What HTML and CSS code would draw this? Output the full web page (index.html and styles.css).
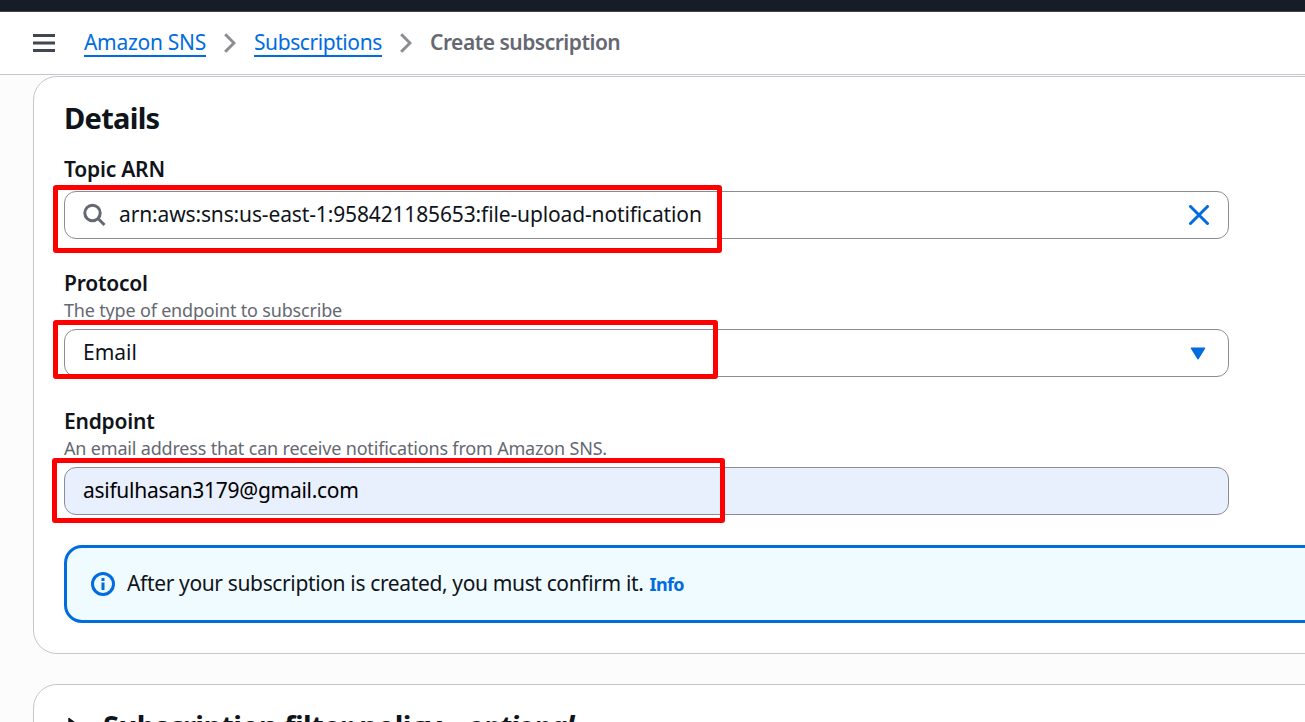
FILE: index.html
```
<!DOCTYPE html>
<html lang="en">
<head>
<meta charset="utf-8">
<title>Create subscription</title>
<link rel="stylesheet" href="styles.css">
</head>
<body>
<div class="topnav"></div>
<header class="header">
  <svg class="menu" width="22" height="18" viewBox="0 0 22 18"><path d="M0 1.5h22M0 9h22M0 16.5h22" stroke="#424650" stroke-width="3"/></svg>
  <nav class="crumbs">
    <a class="crumb crumb-service" href="#">Amazon SNS</a>
    <svg class="chevron" width="12" height="20" viewBox="0 0 12 20"><path d="M1.200 1.200L10 10l-8.800 8.800" fill="none" stroke="#8c8c94" stroke-width="3"/></svg>
    <a class="crumb crumb-list" href="#">Subscriptions</a>
    <svg class="chevron" width="12" height="20" viewBox="0 0 12 20"><path d="M1.200 1.200L10 10l-8.800 8.800" fill="none" stroke="#8c8c94" stroke-width="3"/></svg>
    <span class="crumb-current">Create subscription</span>
  </nav>
</header>
<main class="content">
  <section class="card">
    <h2 class="title details-title">Details</h2>
    <div class="field">
      <div class="label label-topic">Topic ARN</div>
      <div class="input">
        <svg class="search" width="24" height="24" viewBox="0 0 24 24"><circle cx="9.500" cy="10" r="7.700" fill="none" stroke="#656871" stroke-width="3"/><path d="M15 15.500l6.500 6.500" stroke="#656871" stroke-width="3"/></svg>
        <span class="value value-arn">arn:aws:sns:us-east-1:958421185653:file-upload-notification</span>
        <svg class="clear" width="20" height="20" viewBox="0 0 20 20"><path d="M1.500 1.500l17 17M18.500 1.500l-17 17" stroke="#006ce0" stroke-width="3" stroke-linecap="round"/></svg>
        <div class="mark mark-topic"></div>
      </div>
    </div>
    <div class="field">
      <div class="label">Protocol</div>
      <div class="hint">The type of endpoint to subscribe</div>
      <div class="input">
        <span class="value">Email</span>
        <svg class="caret" width="16" height="13" viewBox="0 0 16 13"><path d="M1.500 1.200h13L8 11.700z" fill="#006ce0" stroke="#006ce0" stroke-width="1.600" stroke-linejoin="round"/></svg>
        <div class="mark mark-protocol"></div>
      </div>
    </div>
    <div class="field">
      <div class="label">Endpoint</div>
      <div class="hint">An email address that can receive notifications from Amazon SNS.</div>
      <div class="input input-filled">
        <span class="value value-endpoint">asifulhasan3179@gmail.com</span>
        <div class="mark mark-endpoint"></div>
      </div>
    </div>
    <div class="alert">
      <svg class="info-icon" width="24" height="24" viewBox="0 0 24 24"><circle cx="12" cy="12" r="10.500" fill="none" stroke="#006ce0" stroke-width="3"/><path d="M10.500 6h3v3h-3zM10.500 10.500h3V18h-3z" fill="#006ce0"/></svg>
      <span class="alert-text">After your subscription is created, you must confirm it.</span>
      <a class="info" href="#">Info</a>
    </div>
  </section>
  <section class="card card-policy">
    <svg class="expand" width="12" height="18" viewBox="0 0 12 18"><path d="M1 1.500L11 9 1 16.500z" fill="#0f141a" stroke="#0f141a" stroke-width="1.500" stroke-linejoin="round"/></svg>
    <h2 class="title policy-title">Subscription filter policy</h2>
    <span class="title policy-note">- <i>optional</i></span>
  </section>
</main>
</body>
</html>
```
FILE: styles.css
```
* { box-sizing: border-box; }
body {
  margin: 0;
  height: 722px;
  overflow: hidden;
  background: #fcfcfd;
  color: #0f141a;
  font: 21px/30px "Noto Sans", sans-serif;
  white-space: nowrap;
}
svg { display: block; flex: none; }
.topnav { height: 12px; background: #161d26; border-bottom: 1px solid #424650; }
.header {
  height: 63px;
  display: flex;
  align-items: center;
  padding-left: 33px;
  background: #fff;
  border-bottom: 1px solid #c6c6cd;
}
.crumbs { display: flex; align-items: center; margin-left: 29px; }
.crumb { color: #006ce0; text-decoration: none; border-bottom: 2px solid #006ce0; line-height: 26px; height: 28px; flex: none; }
.crumb-service { width: 122px; letter-spacing: -0.3px; }
.crumb-list { width: 128px; letter-spacing: -0.42px; }
.chevron { margin: 0 18px; }
.crumb-current { color: #656871; font-weight: 600; letter-spacing: -0.5px; line-height: 28px; padding-bottom: 2px; }
.content { padding: 1px 0 0 33px; }
.card {
  width: 1400px;
  height: 578px;
  padding: 23px 30px 0;
  background: #fff;
  border: 1px solid #c6c6cd;
  border-radius: 24px;
}
.title { margin: 0; font-size: 29px; line-height: 36px; font-weight: 700; }
.details-title { margin-bottom: 18px; letter-spacing: -0.7px; }
.field { width: 1165px; margin-bottom: 30px; }
.label { font-weight: 600; line-height: 30px; letter-spacing: -0.22px; }
.label-topic { margin-bottom: 7px; }
.hint { font-size: 18px; line-height: 24px; color: #656871; letter-spacing: -0.18px; margin-bottom: 7px; }
.field + .field { margin-top: -1px; }
.input {
  position: relative;
  height: 48px;
  display: flex;
  align-items: center;
  padding: 0 18px;
  border: 1px solid #8c8c94;
  border-radius: 12px;
}
.input-filled { background: #e8effd; color: #000; }
.value { padding-bottom: 2px; }
.value-arn { letter-spacing: -0.14px; }
.value-endpoint { letter-spacing: -0.28px; }
.search { margin-right: 12px; }
.clear, .caret { margin-left: auto; }
.clear { margin-right: 1px; }
.caret { margin-right: 4px; }
.mark { position: absolute; border: 5px solid #f00; border-radius: 3px; }
.mark-topic { left: -12px; top: -7px; width: 669px; height: 68px; }
.mark-protocol { left: -12px; top: -10px; width: 665px; height: 59px; }
.mark-endpoint { left: -13px; top: -10px; width: 673px; height: 65px; }
.alert {
  display: flex;
  align-items: center;
  height: 78px;
  padding-left: 24px;
  background: #f0fbff;
  border: 3px solid #006ce0;
  border-radius: 18px;
}
.alert-text { margin: 0 6px 0 12px; letter-spacing: -0.36px; padding-bottom: 2px; }
.info { color: #006ce0; font-size: 18px; font-weight: 700; letter-spacing: -0.6px; text-decoration: none; }
.card-policy { margin-top: 30px; display: flex; align-items: flex-start; padding: 23px 34px; }
.expand { margin: 9px 23px 0 0; }
.policy-title { letter-spacing: -0.55px; }
.policy-note { font-weight: 700; margin-left: 11px; letter-spacing: -1.100px; }
```
